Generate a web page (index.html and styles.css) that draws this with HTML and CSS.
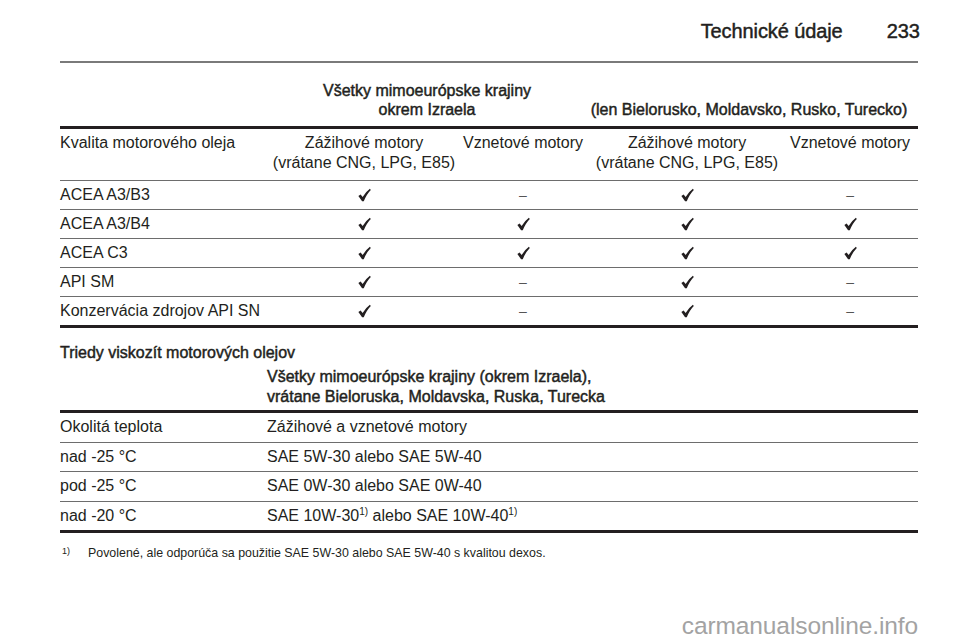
FILE: index.html
```html
<!DOCTYPE html>
<html lang="sk">
<head>
<meta charset="utf-8">
<title>Technické údaje 233</title>
<link rel="stylesheet" href="styles.css">
</head>
<body>
<div class="page">
  <header class="page-head">
    <span class="head-title">Technické údaje</span>
    <span class="head-num">233</span>
  </header>

  <table class="oil-table">
    <colgroup>
      <col class="c1"><col class="c2"><col class="c3"><col class="c4"><col class="c5">
    </colgroup>
    <thead>
      <tr class="region-row">
        <th></th>
        <th colspan="2" class="region">Všetky mimoeurópske krajiny<br>okrem Izraela</th>
        <th colspan="2" class="region">(len Bielorusko, Moldavsko, Rusko, Turecko)</th>
      </tr>
      <tr class="type-row">
        <th class="left">Kvalita motorového oleja</th>
        <th>Zážihové motory<br>(vrátane CNG, LPG, E85)</th>
        <th class="top">Vznetové motory</th>
        <th>Zážihové motory<br>(vrátane CNG, LPG, E85)</th>
        <th class="top">Vznetové motory</th>
      </tr>
    </thead>
    <tbody>
      <tr><td class="left">ACEA A3/B3</td><td><svg class="ok" viewBox="0 0 14 14"><path d="M0.4 8.2 L2.8 6.5 L5 9.2 Q8 3.8 12.8 0.3 L13.8 1.5 Q9.6 5.6 6.2 13.6 L4.4 13.6 Z"/></svg></td><td><span class="no">–</span></td><td><svg class="ok" viewBox="0 0 14 14"><path d="M0.4 8.2 L2.8 6.5 L5 9.2 Q8 3.8 12.8 0.3 L13.8 1.5 Q9.6 5.6 6.2 13.6 L4.4 13.6 Z"/></svg></td><td><span class="no">–</span></td></tr>
      <tr><td class="left">ACEA A3/B4</td><td><svg class="ok" viewBox="0 0 14 14"><path d="M0.4 8.2 L2.8 6.5 L5 9.2 Q8 3.8 12.8 0.3 L13.8 1.5 Q9.6 5.6 6.2 13.6 L4.4 13.6 Z"/></svg></td><td><svg class="ok" viewBox="0 0 14 14"><path d="M0.4 8.2 L2.8 6.5 L5 9.2 Q8 3.8 12.8 0.3 L13.8 1.5 Q9.6 5.6 6.2 13.6 L4.4 13.6 Z"/></svg></td><td><svg class="ok" viewBox="0 0 14 14"><path d="M0.4 8.2 L2.8 6.5 L5 9.2 Q8 3.8 12.8 0.3 L13.8 1.5 Q9.6 5.6 6.2 13.6 L4.4 13.6 Z"/></svg></td><td><svg class="ok" viewBox="0 0 14 14"><path d="M0.4 8.2 L2.8 6.5 L5 9.2 Q8 3.8 12.8 0.3 L13.8 1.5 Q9.6 5.6 6.2 13.6 L4.4 13.6 Z"/></svg></td></tr>
      <tr><td class="left">ACEA C3</td><td><svg class="ok" viewBox="0 0 14 14"><path d="M0.4 8.2 L2.8 6.5 L5 9.2 Q8 3.8 12.8 0.3 L13.8 1.5 Q9.6 5.6 6.2 13.6 L4.4 13.6 Z"/></svg></td><td><svg class="ok" viewBox="0 0 14 14"><path d="M0.4 8.2 L2.8 6.5 L5 9.2 Q8 3.8 12.8 0.3 L13.8 1.5 Q9.6 5.6 6.2 13.6 L4.4 13.6 Z"/></svg></td><td><svg class="ok" viewBox="0 0 14 14"><path d="M0.4 8.2 L2.8 6.5 L5 9.2 Q8 3.8 12.8 0.3 L13.8 1.5 Q9.6 5.6 6.2 13.6 L4.4 13.6 Z"/></svg></td><td><svg class="ok" viewBox="0 0 14 14"><path d="M0.4 8.2 L2.8 6.5 L5 9.2 Q8 3.8 12.8 0.3 L13.8 1.5 Q9.6 5.6 6.2 13.6 L4.4 13.6 Z"/></svg></td></tr>
      <tr><td class="left">API SM</td><td><svg class="ok" viewBox="0 0 14 14"><path d="M0.4 8.2 L2.8 6.5 L5 9.2 Q8 3.8 12.8 0.3 L13.8 1.5 Q9.6 5.6 6.2 13.6 L4.4 13.6 Z"/></svg></td><td><span class="no">–</span></td><td><svg class="ok" viewBox="0 0 14 14"><path d="M0.4 8.2 L2.8 6.5 L5 9.2 Q8 3.8 12.8 0.3 L13.8 1.5 Q9.6 5.6 6.2 13.6 L4.4 13.6 Z"/></svg></td><td><span class="no">–</span></td></tr>
      <tr><td class="left">Konzervácia zdrojov API SN</td><td><svg class="ok" viewBox="0 0 14 14"><path d="M0.4 8.2 L2.8 6.5 L5 9.2 Q8 3.8 12.8 0.3 L13.8 1.5 Q9.6 5.6 6.2 13.6 L4.4 13.6 Z"/></svg></td><td><span class="no">–</span></td><td><svg class="ok" viewBox="0 0 14 14"><path d="M0.4 8.2 L2.8 6.5 L5 9.2 Q8 3.8 12.8 0.3 L13.8 1.5 Q9.6 5.6 6.2 13.6 L4.4 13.6 Z"/></svg></td><td><span class="no">–</span></td></tr>
    </tbody>
  </table>

  <h2 class="section-title">Triedy viskozít motorových olejov</h2>
  <table class="visc-table">
    <colgroup><col class="v1"><col class="v2"></colgroup>
    <thead>
      <tr class="region-row">
        <th></th>
        <th class="region">Všetky mimoeurópske krajiny (okrem Izraela),<br>vrátane Bieloruska, Moldavska, Ruska, Turecka</th>
      </tr>
    </thead>
    <tbody>
      <tr><td>Okolitá teplota</td><td>Zážihové a vznetové motory</td></tr>
      <tr><td>nad -25 °C</td><td>SAE 5W-30 alebo SAE 5W-40</td></tr>
      <tr><td>pod -25 °C</td><td>SAE 0W-30 alebo SAE 0W-40</td></tr>
      <tr><td>nad -20 °C</td><td>SAE 10W-30<sup>1)</sup> alebo SAE 10W-40<sup>1)</sup></td></tr>
    </tbody>
  </table>

  <p class="footnote"><sup>1)</sup><span>Povolené, ale odporúča sa použitie SAE 5W-30 alebo SAE 5W-40 s kvalitou dexos.</span></p>

  <div class="watermark">carmanualsonline.info</div>
</div>
</body>
</html>
```

FILE: styles.css
```css
html, body {
  margin: 0;
  padding: 0;
  background: #ffffff;
}

body {
  font-family: "Liberation Sans", Arial, sans-serif;
  font-size: 16px;
  color: #231f20;
}

.page {
  position: relative;
  width: 960px;
  height: 642px;
  box-sizing: border-box;
  padding: 0 42px 0 60px;
  overflow: hidden;
}

.page-head {
  display: flex;
  justify-content: flex-end;
  gap: 44px;
  padding-top: 19px;
  padding-right: 0;
  height: 63px;
  box-sizing: border-box;
  border-bottom: 2px solid #7a7a7a;
  font-size: 20px;
  line-height: 24px;
  -webkit-text-stroke: 0.45px #231f20;
}

.head-num {
  margin-right: -2px;
}

.head-title {
  letter-spacing: -0.1px;
}

table {
  border-collapse: collapse;
  table-layout: fixed;
  width: 100%;
}

th, td {
  padding: 0;
  font-weight: normal;
  text-align: center;
}

.left {
  text-align: left;
}

.oil-table .c1 { width: 208px; }
.oil-table .c2 { width: 192px; }
.oil-table .c3 { width: 126px; }
.oil-table .c4 { width: 202px; }
.oil-table .c5 { width: 130px; }

.oil-table th:last-child, .oil-table td:last-child {
  padding-right: 6px;
}

.region-row th {
  vertical-align: bottom;
  line-height: 19px;
  -webkit-text-stroke: 0.45px #231f20;
}

.oil-table .region-row th {
  padding-top: 18px;
  padding-bottom: 7px;
  border-bottom: 3px solid #231f20;
}

.type-row th {
  vertical-align: top;
  line-height: 20px;
  padding-top: 4px;
  padding-bottom: 7px;
  border-bottom: 1.5px solid #6d6d6d;
}

tbody td {
  height: 28px;
  line-height: 20px;
  vertical-align: middle;
  border-bottom: 1.5px solid #6d6d6d;
}

tbody tr:last-child td {
  border-bottom: 3px solid #231f20;
}

.ok {
  display: inline-block;
  width: 13px;
  height: 14px;
  vertical-align: -2px;
  fill: #231f20;
}

.no {
  font-size: 14px;
  color: #555;
}

.section-title {
  margin: 15px 0 0 0;
  font-size: 16px;
  line-height: 20px;
  font-weight: normal;
  -webkit-text-stroke: 0.45px #231f20;
}

.visc-table .v1 { width: 207px; }

.visc-table th, .visc-table td {
  text-align: left;
}

.visc-table .region-row th {
  line-height: 20px;
  padding-top: 4px;
  padding-bottom: 3px;
  border-bottom: 3px solid #231f20;
}

.visc-table tbody td {
  height: 28.5px;
}

sup {
  font-size: 10px;
  line-height: 0;
  vertical-align: 6px;
}

.footnote {
  display: flex;
  margin: 12px 0 0 2px;
  font-size: 12.4px;
  line-height: 16px;
}

.footnote sup {
  width: 26px;
  font-size: 9px;
  vertical-align: 0;
  line-height: 12px;
}

.watermark {
  position: absolute;
  right: 42px;
  top: 611px;
  font-size: 24.5px;
  line-height: 30px;
  color: #a3a3a3;
  letter-spacing: -0.1px;
}
```
